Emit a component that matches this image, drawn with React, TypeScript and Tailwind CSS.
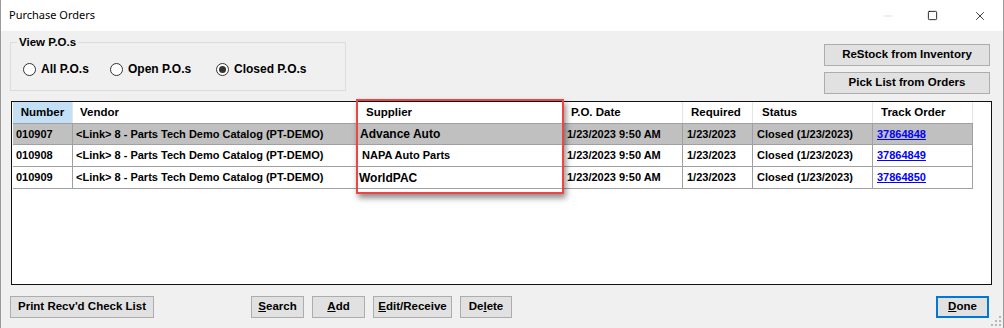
import { Minus, Square, X } from 'lucide-react'

interface PurchaseOrder {
  number: string
  vendor: string
  supplier: string
  supplierClass: string
  poDate: string
  required: string
  status: string
  track: string
}

const orders: PurchaseOrder[] = [
  {
    number: '010907',
    vendor: '<Link> 8 - Parts Tech Demo Catalog (PT-DEMO)',
    supplier: 'Advance Auto',
    supplierClass: 'pl-[3px] text-[12px]',
    poDate: '1/23/2023 9:50 AM',
    required: '1/23/2023',
    status: 'Closed (1/23/2023)',
    track: '37864848'
  },
  {
    number: '010908',
    vendor: '<Link> 8 - Parts Tech Demo Catalog (PT-DEMO)',
    supplier: 'NAPA Auto Parts',
    supplierClass: 'pl-[5px] text-[11px]',
    poDate: '1/23/2023 9:50 AM',
    required: '1/23/2023',
    status: 'Closed (1/23/2023)',
    track: '37864849'
  },
  {
    number: '010909',
    vendor: '<Link> 8 - Parts Tech Demo Catalog (PT-DEMO)',
    supplier: 'WorldPAC',
    supplierClass: 'pl-[2px] text-[12px]',
    poDate: '1/23/2023 9:50 AM',
    required: '1/23/2023',
    status: 'Closed (1/23/2023)',
    track: '37864850'
  }
]

const headers = [
  { label: 'Number', className: 'w-[60px] bg-[#c4e0f6] justify-center' },
  { label: 'Vendor', className: 'w-[284px] pl-[7px]' },
  { label: 'Supplier', className: 'w-[206px] pl-[9px]' },
  { label: 'P.O. Date', className: 'w-[120px] pl-[8px]' },
  { label: 'Required', className: 'w-[70px] pl-[8px]' },
  { label: 'Status', className: 'w-[120px] pl-[9px]' },
  { label: 'Track Order', className: 'w-[100px] pl-[8px]' }
]

const Radio = ({ label, checked, className }: { label: string; checked?: boolean; className?: string }) => (
  <label className={`flex items-center gap-[5px] ${className ?? ''}`}>
    <span className="w-[13px] h-[13px] rounded-full border border-[#333] bg-white flex items-center justify-center">
      {checked && <span className="w-[7px] h-[7px] rounded-full bg-[#333]" />}
    </span>
    <span>{label}</span>
  </label>
)

const WinButton = ({
  children,
  className,
  primary
}: {
  children: React.ReactNode
  className?: string
  primary?: boolean
}) => (
  <button
    className={`h-[22px] bg-[#e1e1e1] text-[11.5px] font-bold text-black flex items-center justify-center ${
      primary ? 'border-2 border-[#0078d7]' : 'border border-[#adadad]'
    } ${className ?? ''}`}
  >
    {children}
  </button>
)

const App = () => {
  return (
    <div className="w-[1004px] h-[328px] bg-[#f0f0f0] border-x border-[#9a9a9a] flex flex-col relative overflow-hidden font-['Liberation_Sans',Arial,sans-serif] text-black">
      {/* Title bar */}
      <div className="h-[31px] bg-white flex items-center shrink-0">
        <span className="pl-[8px] text-[11px] font-['Noto_Sans',sans-serif] text-black">Purchase Orders</span>
        <div className="ml-auto flex items-center h-full">
          <Minus className="w-[14px] h-[14px] text-[#c6c6c6] mr-[32px]" strokeWidth={1} />
          <Square className="w-[11px] h-[11px] text-black mr-[35px]" strokeWidth={1.8} />
          <X className="w-[14px] h-[14px] text-black mr-[16px]" strokeWidth={1.3} />
        </div>
      </div>

      {/* Body */}
      <div className="flex-1 flex flex-col pl-[9px] pr-[13px]">
        <div className="flex h-[70px] shrink-0">
          {/* View P.O.s group */}
          <div className="mt-[11px] w-[336px] h-[49px] border border-[#dcdcdc] relative flex items-center pl-[12px] text-[12px] font-bold">
            <span className="absolute -top-[8px] left-[6px] px-[2px] bg-[#f0f0f0] leading-[14px] text-[11.5px]">View P.O.s</span>
            <div className="flex items-center mt-[5px]">
              <Radio label="All P.O.s" className="w-[87px]" />
              <Radio label="Open P.O.s" className="w-[106px]" />
              <Radio label="Closed P.O.s" checked />
            </div>
          </div>

          <div className="ml-auto mt-[13px] w-[166px] flex flex-col gap-[6px]">
            <WinButton>ReStock from Inventory</WinButton>
            <WinButton>Pick List from Orders</WinButton>
          </div>
        </div>

        {/* Grid */}
        <div className="ml-[1px] w-[981px] h-[184px] border border-[#111] bg-white relative shrink-0 pl-[1px] text-[11px] font-bold">
          <div className="flex h-[21px]">
            {headers.map((h) => (
              <div key={h.label} className={`flex items-center border-r border-[#e5e5e5] text-[11.5px] ${h.className}`}>
                {h.label}
              </div>
            ))}
          </div>
          {orders.map((o, i) => (
            <div
              key={o.number}
              className={`flex h-[22px] w-[960px] border-b border-[#a0a0a0] ${i === 0 ? 'bg-[#c0c0c0] border-t' : ''}`}
            >
              <div className="w-[60px] pl-[3px] flex items-center border-r border-[#a0a0a0]">{o.number}</div>
              <div className="w-[284px] pl-[3px] flex items-center border-r border-[#a0a0a0]">{o.vendor}</div>
              <div className={`w-[206px] flex items-center border-r border-[#a0a0a0] ${o.supplierClass}`}>{o.supplier}</div>
              <div className="w-[120px] pl-[4px] flex items-center border-r border-[#a0a0a0]">{o.poDate}</div>
              <div className="w-[70px] pl-[4px] flex items-center border-r border-[#a0a0a0]">{o.required}</div>
              <div className="w-[120px] pl-[4px] flex items-center border-r border-[#a0a0a0]">{o.status}</div>
              <div className="w-[100px] pl-[4px] flex items-center border-r border-[#a0a0a0]">
                <a href="#" className="text-[#0000ff] underline">{o.track}</a>
              </div>
            </div>
          ))}

          {/* highlight around Supplier column */}
          <div className="absolute left-[344px] -top-[3px] w-[208px] h-[95px] border-2 border-[#ee4444] shadow-[2px_4px_6px_rgba(0,0,0,0.45)] pointer-events-none" />
        </div>

        {/* Bottom buttons */}
        <div className="mt-[11px] flex items-center">
          <WinButton className="w-[144px]">Print Recv'd Check List</WinButton>
          <WinButton className="w-[53px] ml-[97px]"><span><u>S</u>earch</span></WinButton>
          <WinButton className="w-[53px] ml-[8px]"><span><u>A</u>dd</span></WinButton>
          <WinButton className="w-[79px] ml-[8px]"><span><u>E</u>dit/Receive</span></WinButton>
          <WinButton className="w-[52px] ml-[8px]"><span>De<u>l</u>ete</span></WinButton>
          <WinButton primary className="w-[53px] ml-auto mr-[1px]"><span><u>D</u>one</span></WinButton>
        </div>
      </div>

      {/* resize grip */}
      <svg className="absolute right-[2px] bottom-[2px]" width="10" height="10" viewBox="0 0 10 10">
        {[[8, 0], [8, 4], [4, 4], [8, 8], [4, 8], [0, 8]].map(([x, y]) => (
          <rect key={`${x}-${y}`} x={x} y={y} width="2" height="2" fill="#b8b8b8" />
        ))}
      </svg>
    </div>
  )
}

export default App
